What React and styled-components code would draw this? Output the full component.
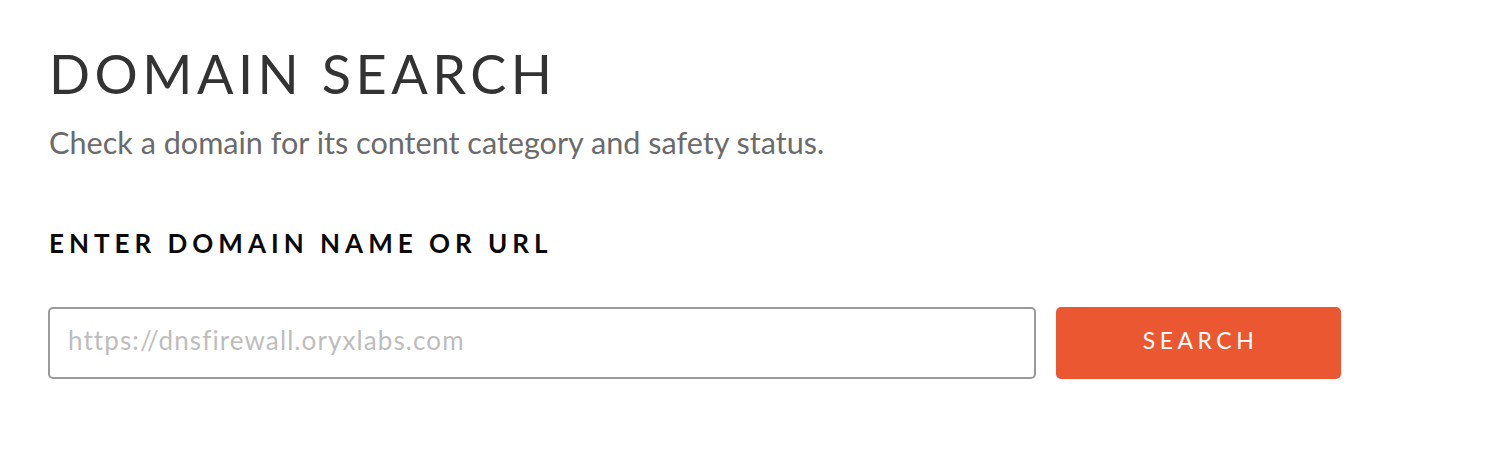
import React from 'react';
import styled, { createGlobalStyle } from 'styled-components';

const GlobalStyle = createGlobalStyle`
  body {
    margin: 0;
    background: #fff;
    font-family: Lato, 'Noto Sans', sans-serif;
  }
`;

const Page = styled.div`
  padding: 42px 48px 0 48px;
`;

const Title = styled.h1`
  margin: 0 0 0 1px;
  font-size: 54px;
  font-weight: 400;
  letter-spacing: 4.5px;
  line-height: 64px;
  color: #333;
`;

const Subtitle = styled.p`
  margin: 19px 0 0 1px;
  font-size: 30.6px;
  line-height: 36px;
  color: #6b6b6b;
`;

const Label = styled.h2`
  margin: 67px 0 0 1px;
  font-size: 26px;
  font-weight: 700;
  letter-spacing: 5px;
  line-height: 30px;
  color: #0a0a0a;
`;

const SearchRow = styled.div`
  display: flex;
  gap: 20px;
  margin-top: 49px;
`;

const Input = styled.input`
  box-sizing: border-box;
  width: 988px;
  height: 72px;
  padding: 0 18px 6px;
  border: 2px solid #9a9a9a;
  border-radius: 5px;
  font-family: inherit;
  font-size: 26px;
  letter-spacing: 1.1px;
  color: #333;
  outline: none;
  caret-color: #222;
  &::placeholder {
    color: #bdbdbd;
  }
`;

const Button = styled.button`
  width: 285px;
  height: 72px;
  padding: 0 0 7px 4px;
  border: none;
  border-radius: 5px;
  background: #eb5730;
  color: #fff;
  font-family: inherit;
  font-size: 23px;
  letter-spacing: 4.5px;
  cursor: pointer;
`;

const App = () => {
  return (
    <>
      <GlobalStyle />
      <Page>
        <Title>DOMAIN SEARCH</Title>
        <Subtitle>Check a domain for its content category and safety status.</Subtitle>
        <Label>ENTER DOMAIN NAME OR URL</Label>
        <SearchRow>
          <Input placeholder='https://dnsfirewall.oryxlabs.com' autoFocus />
          <Button>SEARCH</Button>
        </SearchRow>
      </Page>
    </>
  );
};

export default App;
